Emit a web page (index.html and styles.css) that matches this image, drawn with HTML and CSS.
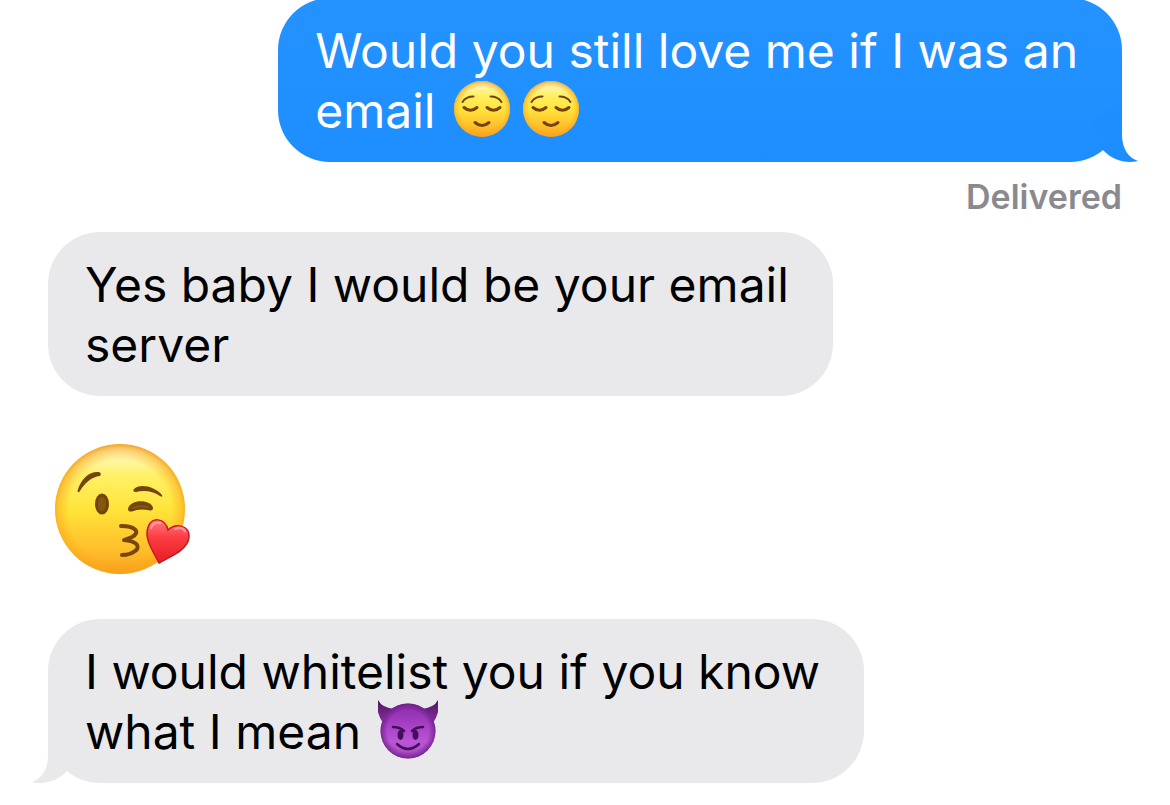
FILE: index.html
```html
<!DOCTYPE html>
<html lang="en">
<head>
<meta charset="utf-8">
<meta name="viewport" content="width=device-width, initial-scale=1">
<title>Messages</title>
<link rel="stylesheet" href="styles.css">
</head>
<body>
<svg class="defs" aria-hidden="true">
  <defs>
    <linearGradient id="face" x1="0" y1="0" x2="0" y2="1">
      <stop offset=".03" stop-color="#fffbd0"/>
      <stop offset=".25" stop-color="#fff065"/>
      <stop offset=".5" stop-color="#ffe43a"/>
      <stop offset=".8" stop-color="#ffc02c"/>
      <stop offset="1" stop-color="#f9a01c"/>
    </linearGradient>
    <radialGradient id="rim" cx=".5" cy=".52" r=".53">
      <stop offset=".75" stop-color="#f9a51a" stop-opacity="0"/>
      <stop offset=".9" stop-color="#f9a51a" stop-opacity=".5"/>
      <stop offset="1" stop-color="#ec9410" stop-opacity=".95"/>
    </radialGradient>
    <linearGradient id="heart" x1="0" y1="0" x2="0" y2="1">
      <stop offset="0" stop-color="#ff7a80"/>
      <stop offset=".4" stop-color="#fb3d43"/>
      <stop offset="1" stop-color="#e91c25"/>
    </linearGradient>
    <linearGradient id="imp" x1="0" y1="0" x2="0" y2="1">
      <stop offset="0" stop-color="#8a2ba6"/>
      <stop offset=".3" stop-color="#a03bc0"/>
      <stop offset=".7" stop-color="#bb55d6"/>
      <stop offset="1" stop-color="#a548bd"/>
    </linearGradient>
    <radialGradient id="imprim">
      <stop offset=".75" stop-color="#6a1d86" stop-opacity="0"/>
      <stop offset="1" stop-color="#6a1d86" stop-opacity=".8"/>
    </radialGradient>
    <linearGradient id="horn" x1="0" y1="0" x2="0" y2="1">
      <stop offset="0" stop-color="#4e1762"/>
      <stop offset="1" stop-color="#8a309f"/>
    </linearGradient>
    <symbol id="relieved" viewBox="0 0 60 60">
      <circle cx="30" cy="30" r="28" fill="url(#face)"/>
      <circle cx="30" cy="30" r="28" fill="url(#rim)"/>
      <g fill="none" stroke="#754309" stroke-linecap="round">
        <path stroke-width="2" d="M10.500 23Q14 17.500 21.500 17.500M49.500 23Q46 17.500 38.500 17.500"/>
        <path stroke-width="3" d="M12 28.500q6.500 5.500 13 0M48 28.500q-6.500 5.500-13 0"/>
        <path stroke-width="3" d="M23 43.500q7 6 14 0"/>
      </g>
    </symbol>
    <symbol id="tail" viewBox="0 0 50 60">
      <path d="M32 0V33C32 47 39 56 48 59C36 62 22 58 13 48L0 20Z"/>
    </symbol>
  </defs>
</svg>

<main class="chat">
  <div class="bubble sent">
    <p class="text">Would you still love me if I was an<br>email <svg class="emoji" role="img" aria-label="relieved face"><use href="#relieved"/></svg><svg class="emoji" role="img" aria-label="relieved face"><use href="#relieved"/></svg></p>
    <svg class="tail" aria-hidden="true"><use href="#tail"/></svg>
  </div>
  <p class="status">Delivered</p>

  <div class="bubble received">
    <p class="text">Yes baby I would be your email<br>server</p>
  </div>

  <svg class="sticker" viewBox="0 0 140 136" role="img" aria-label="face blowing a kiss">
    <circle cx="68" cy="69" r="65" fill="url(#face)"/>
    <circle cx="68" cy="69" r="65" fill="url(#rim)"/>
    <g fill="#74450b">
      <path d="M25.500 51C29 38 38 31 47 32Q50 33 48 36C39 37 33 43 28 51Q26 53.500 25.500 51Z"/>
      <path d="M82 49C87 43 103 46 110 55Q111 58 108 56C101 51 92 50 84 52Q80 52 82 49Z"/>
      <ellipse cx="50" cy="64" rx="7" ry="10.500"/>
      <path d="M76 69C78 59 99 59 101 68Q101 71 98 70.500Q88 68 80 71.500Q76 72 76 69Z"/>
    </g>
    <ellipse cx="50" cy="64" rx="4" ry="7" fill="#855812"/>
    <path d="M81 68Q88 65 96 67" fill="none" stroke="#855812" stroke-width="2" stroke-linecap="round"/>
    <path d="M69 86C83 86 89 92 80 97L72 100C85 101 89 107 83 111Q78 115 70 115" fill="none" stroke="#794609" stroke-width="4" stroke-linecap="round" stroke-linejoin="round"/>
    <path d="M107 123C101 111 92 99 96 87C99 77 113 77 116 90C124 82 138 86 137 97C136 110 119 116 107 123Z" fill="url(#heart)" stroke="#c9161e" stroke-width="1.500"/>
    <path d="M99 88Q102 81 108 83M123 89Q130 86 133 91" fill="none" stroke="#ffb3b5" stroke-width="2.500" stroke-linecap="round" opacity=".6"/>
  </svg>

  <div class="bubble received">
    <p class="text">I would whitelist you if you know<br>what I mean <svg class="emoji" viewBox="0 0 60 60" role="img" aria-label="smiling face with horns">
      <path fill="url(#horn)" d="M5 23Q-3 11 0 0Q4 8 17 9L18 14L9 24ZM55 23Q63 11 60 0Q56 8 43 9L42 14L51 24Z"/>
      <circle cx="30" cy="31" r="27.500" fill="url(#imp)"/>
      <circle cx="30" cy="31" r="27.500" fill="url(#imprim)"/>
      <ellipse cx="22.500" cy="35" rx="3" ry="5" fill="#42105a"/>
      <ellipse cx="37.500" cy="35" rx="3" ry="5" fill="#42105a"/>
      <g fill="none" stroke="#42105a" stroke-width="2.500" stroke-linecap="round">
        <path d="M15 27Q22 27 26 31M45 27Q38 27 34 31"/>
        <path d="M19 44Q30 54 41 44"/>
      </g>
    </svg></p>
    <svg class="tail" aria-hidden="true"><use href="#tail"/></svg>
  </div>
</main>
</body>
</html>
```

FILE: styles.css
```css
* {
  box-sizing: border-box;
}

body {
  margin: 0;
  background: #fff;
  color: #000;
  font-family: Inter, "Liberation Sans", sans-serif;
  overflow-x: hidden;
}

p {
  margin: 0;
}

.defs {
  position: absolute;
  width: 0;
  height: 0;
}

/* The thread is scrolled slightly past the first bubble's top edge. */
.chat {
  display: flex;
  flex-direction: column;
  align-items: flex-start;
  margin-top: -2px;
  padding: 0 48px 20px;
}

.bubble {
  position: relative;
  padding: 23px 44px 21px 37px;
  border-radius: 52px;
}

.text {
  font-size: 48px;
  line-height: 60px;
}

.sent {
  align-self: flex-end;
  background: linear-gradient(#2493ff, #1e8eff);
  color: #fff;
}

.received {
  background: #e9e9eb;
}

.tail {
  position: absolute;
  right: -18px;
  bottom: 0;
  width: 50px;
  height: 60px;
  fill: #1e8eff;
}

.received .tail {
  right: auto;
  left: -18px;
  fill: #e9e9eb;
  transform: scaleX(-1);
}

.emoji {
  width: 60px;
  height: 60px;
  margin: -2px 6px 2px 3px;
  vertical-align: top;
}

.status {
  align-self: flex-end;
  color: #8a8a8e;
  font-size: 34px;
  font-weight: 600;
  line-height: 70px;
}

.sticker {
  width: 140px;
  height: 136px;
  margin: 44px 4px 43px;
}
```
